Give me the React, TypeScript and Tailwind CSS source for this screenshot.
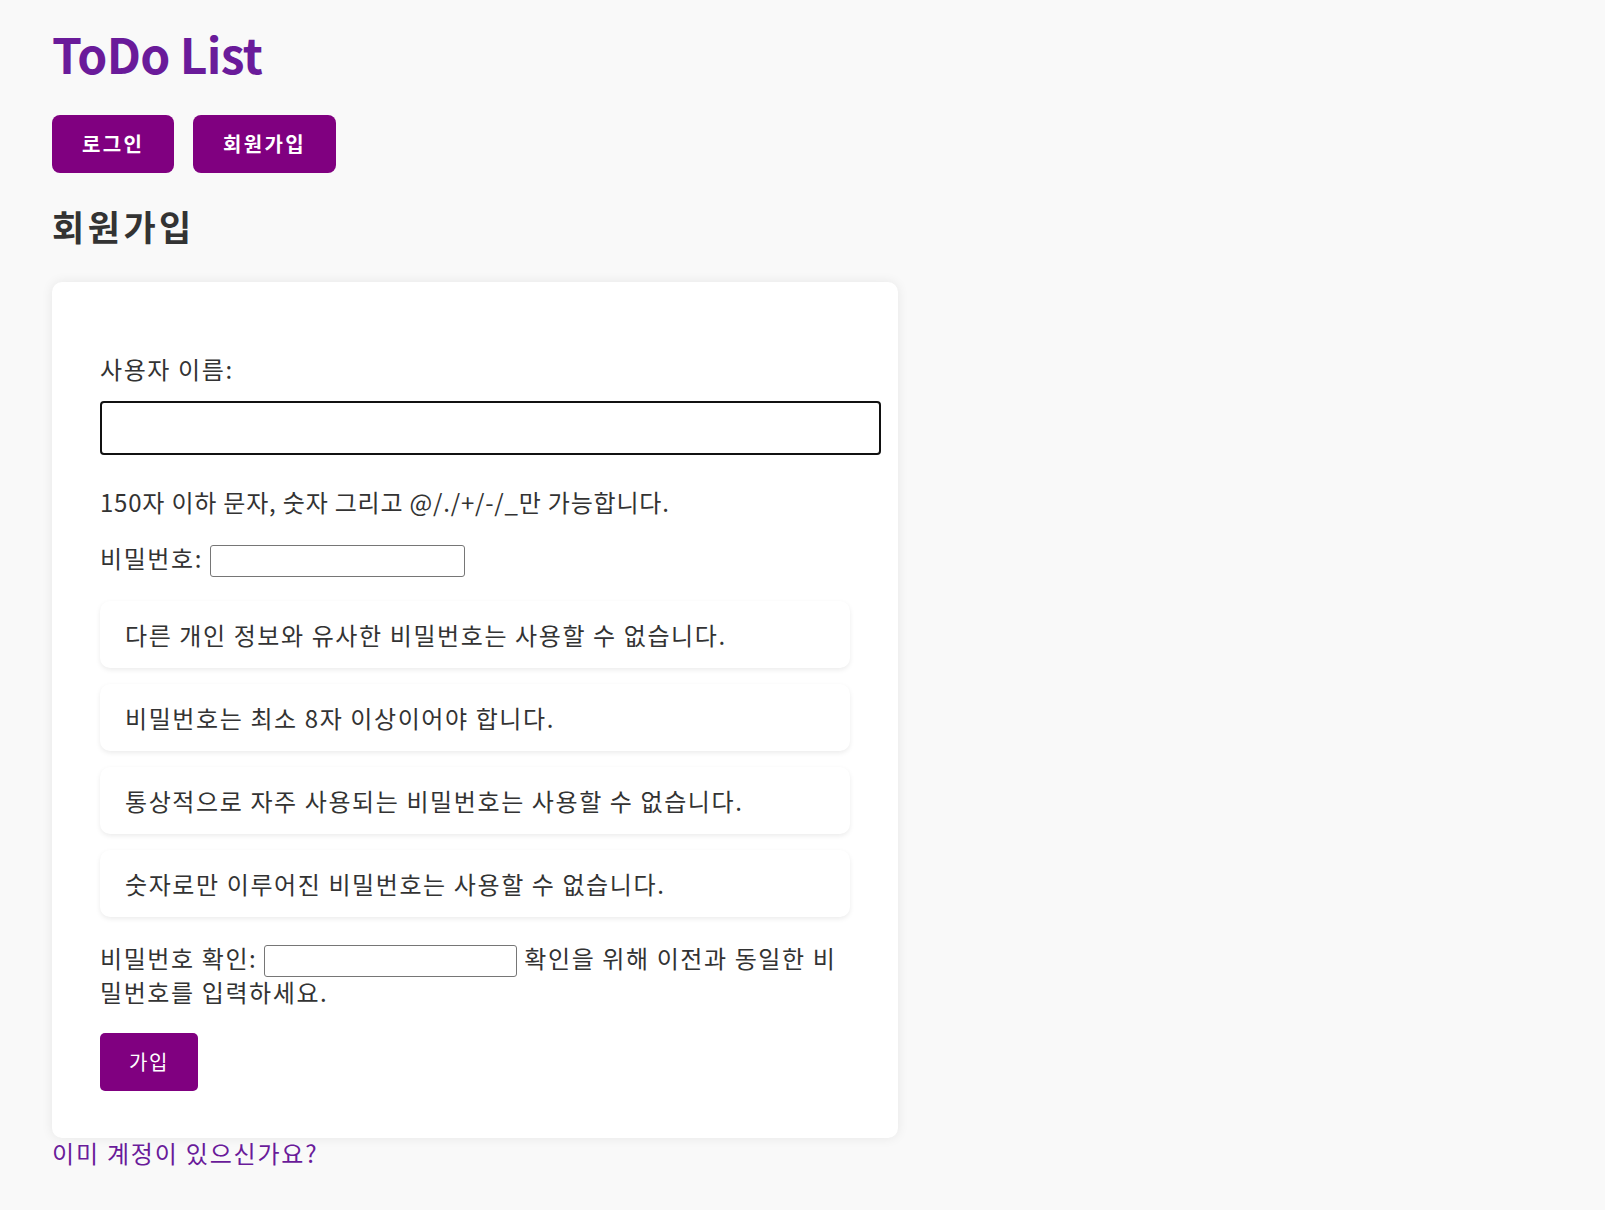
import { useState } from 'react';

const rules = [
  '다른 개인 정보와 유사한 비밀번호는 사용할 수 없습니다.',
  '비밀번호는 최소 8자 이상이어야 합니다.',
  '통상적으로 자주 사용되는 비밀번호는 사용할 수 없습니다.',
  '숫자로만 이루어진 비밀번호는 사용할 수 없습니다.',
];

export default function App() {
  const [username, setUsername] = useState('');
  const [password, setPassword] = useState('');
  const [password2, setPassword2] = useState('');

  return (
    <div className="min-h-screen bg-[#f9f9f9] px-[52px] pb-10 text-[#333] font-['Noto_Sans_CJK_KR',sans-serif]">
      <h1 className="pt-[29px] text-[48px] leading-[48px] font-bold tracking-[-0.7px] text-[#6a1b9a]">ToDo List</h1>

      {/* Nav */}
      <div className="mt-[38px] flex gap-[19px]">
        <button className="rounded-[8px] bg-[#800080] px-[30px] py-[14px] text-[20px] leading-[30px] font-bold tracking-[2.3px] text-white">
          로그인
        </button>
        <button className="rounded-[8px] bg-[#800080] px-[30px] py-[14px] text-[20px] leading-[30px] font-bold tracking-[2.3px] text-white">
          회원가입
        </button>
      </div>

      <h2 className="mt-[35px] text-[35px] leading-[35px] font-bold tracking-[3.5px] text-[#333]">회원가입</h2>

      {/* Signup card */}
      <form
        className="mt-[39px] w-[846px] rounded-[10px] bg-white px-[48px] pt-[70px] pb-[47px] text-[24px] leading-[34px] tracking-[1.6px] shadow-[0_0_12px_rgba(0,0,0,0.08)]"
        onSubmit={(e) => e.preventDefault()}
      >
        <label className="block">사용자 이름:</label>
        <input
          type="text"
          value={username}
          onChange={(e) => setUsername(e.target.value)}
          className="mt-[15px] block h-[54px] w-[781px] rounded-[4px] border-2 border-[#111] bg-white px-3"
        />
        <p className="mt-[30px] tracking-[0.8px]">150자 이하 문자, 숫자 그리고 @/./+/-/_만 가능합니다.</p>

        <p className="mt-[22px]">
          비밀번호:{' '}
          <input
            type="password"
            value={password}
            onChange={(e) => setPassword(e.target.value)}
            className="-my-[3px] inline-block h-[32px] w-[255px] rounded-[3px] border border-[#767676] bg-white align-middle"
          />
        </p>

        <div className="mt-[26px] flex w-[750px] flex-col gap-[16px]">
          {rules.map((r) => (
            <div
              key={r}
              className="flex h-[67px] items-center rounded-[10px] bg-white px-[25px] shadow-[0_2px_5px_rgba(0,0,0,0.08)]"
            >
              {r}
            </div>
          ))}
        </div>

        <p className="mt-[24px] w-[750px]">
          비밀번호 확인:{' '}
          <input
            type="password"
            value={password2}
            onChange={(e) => setPassword2(e.target.value)}
            className="-my-[3px] inline-block h-[32px] w-[253px] rounded-[3px] border border-[#767676] bg-white align-middle"
          />{' '}
          확인을 위해 이전과 동일한 비밀번호를 입력하세요.
        </p>

        <button
          type="submit"
          className="mt-[24px] rounded-[5px] bg-[#800080] px-[29px] py-[14px] text-[20px] leading-[30px] tracking-[1.5px] text-white"
        >
          가입
        </button>
      </form>

      <a href="#" className="mt-[3px] block text-[24px] leading-[24px] tracking-[1.8px] text-[#6a1b9a]">
        이미 계정이 있으신가요?
      </a>
    </div>
  );
}
